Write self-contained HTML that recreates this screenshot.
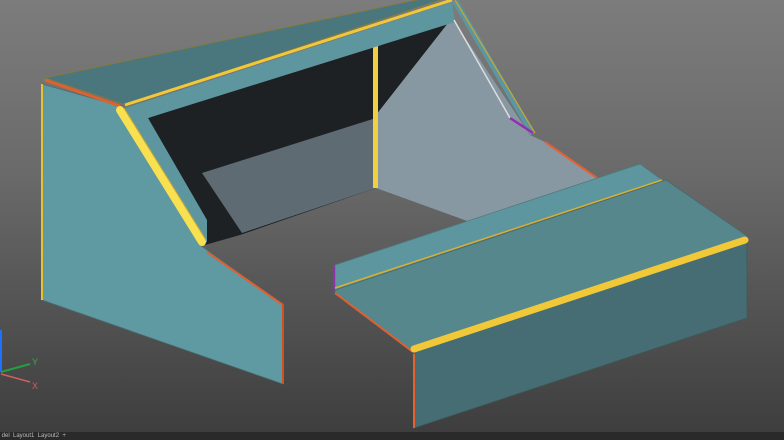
<!DOCTYPE html>
<html><head><style>
html,body{margin:0;padding:0;width:784px;height:440px;overflow:hidden;background:#555}
#bg{position:absolute;left:0;top:0;width:784px;height:432px;background:linear-gradient(#7c7c7c,#6a6a6a 40%,#3e3e3e)}
svg{position:absolute;left:0;top:0}
#bar{position:absolute;left:0;top:432px;width:784px;height:8px;background:#2a2a2a;font:6px "Liberation Sans",sans-serif;color:#bbb;line-height:8px;white-space:nowrap}
</style></head><body>
<div id="bg"></div>
<svg width="784" height="432" viewBox="0 0 784 432">
<!-- interior -->
<polygon points="148,118 452,18 376,115 376,188 240,235 205,245" fill="#1e2124"/>
<polygon points="452,18 530,135 545,142 597,178 470,222 376,188 376,115" fill="#8898a2"/>
<polygon points="202,173 376,118 376,188 242,233" fill="#5e6b73"/>
<rect x="373" y="45" width="5" height="143" fill="#f0d040"/>
<polygon points="125,108 452,2 455,22 148,118" fill="#5e96a0"/>
<polygon points="125,108 148,118 207,220 207,242 200,245" fill="#5e96a0"/>
<!-- right slanted inner strip -->
<polygon points="452,2 458,0 535,133 530,135" fill="#5e96a0"/>
<line x1="454" y1="20" x2="510" y2="118" stroke="#ddd" stroke-width="1.5"/>
<line x1="510" y1="118" x2="533" y2="133" stroke="#9030b0" stroke-width="2.5"/>
<line x1="455" y1="0" x2="535" y2="133" stroke="#c8a830" stroke-width="1.2"/>
<line x1="545" y1="142" x2="597" y2="178" stroke="#e86030" stroke-width="2"/>
<!-- roof -->
<polygon points="45,78 440,-5 455,-5 125,105 120,103" fill="#4a777d" stroke="#8a7a30" stroke-width="0.8"/>
<line x1="125" y1="105" x2="452" y2="0" stroke="#f0c838" stroke-width="3"/>
<!-- left side panel -->
<polygon points="42,84 120,106 200,245 283,305 283,384 42,300" fill="#5f99a1" stroke="#4a6e72" stroke-width="0.8"/>
<line x1="42" y1="84" x2="42" y2="300" stroke="#e8c030" stroke-width="2"/>
<line x1="45" y1="80" x2="120" y2="106" stroke="#e06030" stroke-width="3"/>
<line x1="120" y1="110" x2="202" y2="242" stroke="#f8e050" stroke-width="8" stroke-linecap="round"/>
<line x1="120" y1="110" x2="202" y2="242" stroke="#c8a830" stroke-width="1" transform="translate(4,-2)"/>
<line x1="207" y1="252" x2="283" y2="305" stroke="#e06030" stroke-width="2"/>
<line x1="283" y1="305" x2="283" y2="384" stroke="#d05020" stroke-width="2"/>
<!-- right box -->
<polygon points="335,265 640,164 662,180 335,290" fill="#5e96a0" stroke="#4f7a80" stroke-width="0.8"/>
<polygon points="335,290 666,180 747,236 413,352 335,293" fill="#56878d" stroke="#4a6a6e" stroke-width="0.8"/>
<line x1="335" y1="288" x2="662" y2="180" stroke="#d8b030" stroke-width="1.5"/>
<line x1="334" y1="266" x2="334" y2="290" stroke="#9030b0" stroke-width="2"/>
<line x1="335" y1="293" x2="413" y2="352" stroke="#e06030" stroke-width="2"/>
<polygon points="413,352 747,240 747,318 414,428" fill="#456d73" stroke="#3d5a5e" stroke-width="0.8"/>
<line x1="414" y1="349" x2="745" y2="240" stroke="#f0c838" stroke-width="7" stroke-linecap="round"/>
<line x1="414" y1="354" x2="414" y2="428" stroke="#e86030" stroke-width="2"/>
<!-- axes -->
<line x1="1" y1="372" x2="1" y2="330" stroke="#2070ff" stroke-width="2"/>
<line x1="1" y1="372" x2="30" y2="364" stroke="#20a040" stroke-width="2"/>
<line x1="1" y1="374" x2="30" y2="382" stroke="#d06060" stroke-width="1.5"/>
<text x="32" y="365" font-family="Liberation Sans,sans-serif" font-size="9" fill="#30b050">Y</text>
<text x="32" y="389" font-family="Liberation Sans,sans-serif" font-size="9" fill="#d06060">X</text>
</svg>
<div id="bar">&nbsp;del&nbsp;&nbsp;Layout1&nbsp;&nbsp;Layout2&nbsp;&nbsp;+</div>
</body></html>
